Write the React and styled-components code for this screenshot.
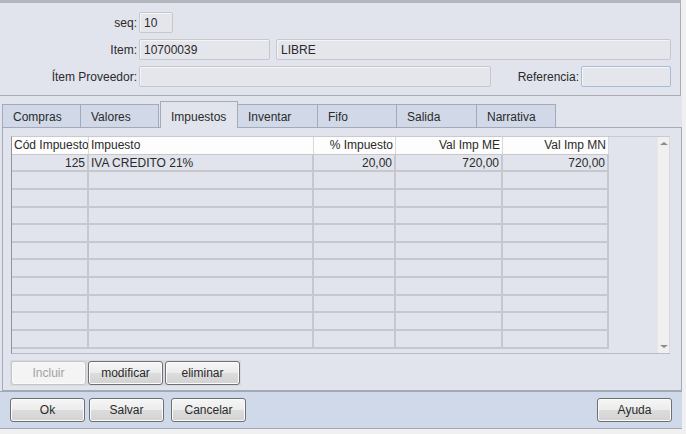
import React from 'react';
import styled, { createGlobalStyle } from 'styled-components';

const GlobalStyle = createGlobalStyle`
  body {
    margin: 0;
    background: #f0f0f0;
    font-family: 'Liberation Sans', Arial, sans-serif;
    font-size: 12px;
    color: #2a2a2a;
  }
`;

const Window = styled.div`
  width: 682px;
  height: 434px;
  display: flex;
  flex-direction: column;
  background: #f0f0f0;
`;

const TopPanel = styled.div`
  height: 96px;
  flex: none;
  border-top: 3px solid #b2b6bd;
  border-right: 1px solid #a9adb5;
  border-bottom: 1px solid #a9adb5;
  background: #e1e4ec;
  padding: 9px 9px 0 0;
  box-sizing: border-box;
  display: flex;
  flex-direction: column;
  gap: 6px;
  margin-right: 1px;
`;

const FieldRow = styled.div`
  display: flex;
  align-items: center;
  height: 21px;
`;

const Label = styled.span`
  width: ${p => p.width || 139}px;
  text-align: right;
  padding-right: 2px;
  flex-shrink: 0;
  white-space: nowrap;
  box-sizing: border-box;
`;

const Input = styled.div`
  width: ${p => (p.width ? `${p.width}px` : 'auto')};
  flex: ${p => (p.grow ? 1 : 'none')};
  height: 21px;
  box-sizing: border-box;
  border: 1px solid ${p => (p.focus ? '#a6bcd8' : '#c6c8cc')};
  border-radius: 2px;
  background: #e4e6ec;
  box-shadow: inset 1px 1px 0 #f4f5f8;
  padding: 3px 4px 0;
  margin-left: ${p => p.ml || 0}px;
  line-height: 14px;
`;

const TabArea = styled.div`
  flex: none;
  height: 295px;
  background: #e1e4ec;
  padding: 8px 0 0 2px;
  box-sizing: border-box;
  display: flex;
  flex-direction: column;
`;

const TabStrip = styled.div`
  display: flex;
  align-items: flex-end;
  height: 23px;
  position: relative;
  z-index: 1;
`;

const Tab = styled.div`
  width: ${p => p.w}px;
  flex: none;
  box-sizing: border-box;
  height: ${p => (p.active ? 27 : 23)}px;
  margin-bottom: ${p => (p.active ? -1 : 0)}px;
  padding: ${p => (p.active ? '8px' : '5px')} 0 0 10px;
  line-height: 14px;
  background: ${p => (p.active ? '#e1e4ec' : '#d1d9e8')};
  border: 1px solid #a4abb8;
  border-bottom: none;
  margin-left: ${p => (p.active ? 2 : 0)}px;
  margin-right: -1px;
  position: relative;
  z-index: ${p => (p.active ? 1 : 0)};
`;

const TabPanel = styled.div`
  width: 680px;
  height: 264px;
  box-sizing: border-box;
  border: 1px solid #a4abb8;
  padding: 8px 11px 0 8px;
  display: flex;
  flex-direction: column;
`;

const GridBox = styled.div`
  height: 216px;
  flex: none;
  display: flex;
  border-left: 1px solid #8f949c;
  border-top: 1px solid #c7cad0;
  border-bottom: 1px solid #b8bcc4;
`;

const Table = styled.div`
  width: 597px;
  display: grid;
  grid-template-columns: 77px 225px 82px 107px 106px;
  grid-auto-rows: 17.65px;
  align-content: start;
  overflow: hidden;
`;

const HeadCell = styled.div`
  background: #fdfdfd;
  border-right: 1px solid #d8d8d8;
  border-bottom: 1px solid #c8c8c8;
  padding: 0 2px;
  text-align: ${p => (p.right ? 'right' : 'left')};
  line-height: 16px;
  white-space: nowrap;
  overflow: hidden;
`;

const Cell = styled.div`
  border-right: 2px solid #c6c8cd;
  border-bottom: 2px solid #c6c8cd;
  box-sizing: border-box;
  padding: 0 2px;
  text-align: ${p => (p.right ? 'right' : 'left')};
  line-height: 16px;
  white-space: nowrap;
`;

const Filler = styled.div`
  flex: 1;
`;

const ScrollBar = styled.div`
  width: 13px;
  background: #f0f0f0;
  border-left: 1px solid #e6e6e6;
  border-right: 1px solid #dadada;
  display: flex;
  flex-direction: column;
  justify-content: space-between;
  align-items: center;
  padding: 5px 0;
  box-sizing: border-box;
`;

const Arrow = styled.div`
  width: 0;
  height: 0;
  border-left: 4px solid transparent;
  border-right: 4px solid transparent;
  ${p =>
    p.down
      ? 'border-top: 3px solid #8a8a8a;'
      : 'border-bottom: 3px solid #8a8a8a;'}
`;

const ButtonGroup = styled.div`
  margin-top: 6px;
  align-self: flex-start;
  display: flex;
  gap: 2px;
  padding: 1px;
  margin-left: -1px;
  background: #d6d9df;
`;

const Button = styled.button`
  width: 75px;
  height: 24px;
  font-family: 'Liberation Sans', Arial, sans-serif;
  font-size: 12px;
  color: ${p => (p.disabled ? '#a2a2a2' : '#2a2a2a')};
  border: 1px solid ${p => (p.disabled ? '#c4c4c4' : '#6f6f6f')};
  border-radius: 3px;
  background: ${p =>
    p.disabled
      ? '#f4f4f4'
      : 'linear-gradient(#f6f6f6 0%, #ececec 48%, #dcdcdc 52%, #d2d2d2 100%)'};
  box-shadow: inset 0 0 0 1px ${p => (p.disabled ? '#fafafa' : '#fbfbfb')};
  padding: 0;
  margin-left: ${p => p.ml || 0}px;
`;

const BottomBar = styled.div`
  height: 38px;
  flex: none;
  box-sizing: border-box;
  background: #d0d9ea;
  border-top: 1px solid #a0a8b6;
  border-bottom: 1px solid #a0a8b6;
  padding: 6px 10px 0 10px;
  display: flex;
  align-items: flex-start;
`;

const Spacer = styled.div`
  flex: 1;
`;

const tabs = [
  { t: 'Compras', w: 79 },
  { t: 'Valores', w: 79 },
  { t: 'Impuestos', w: 78, active: true },
  { t: 'Inventar', w: 81 },
  { t: 'Fifo', w: 80 },
  { t: 'Salida', w: 81 },
  { t: 'Narrativa', w: 80 },
];
const headers = [
  { t: 'Cód Impuesto' },
  { t: 'Impuesto' },
  { t: '% Impuesto', r: true },
  { t: 'Val Imp ME', r: true },
  { t: 'Val Imp MN', r: true },
];
const rows = [['125', 'IVA CREDITO 21%', '20,00', '720,00', '720,00']];
while (rows.length < 11) rows.push(['', '', '', '', '']);

export default function App() {
  return (
    <Window>
      <GlobalStyle />
      <TopPanel>
        <FieldRow>
          <Label>seq:</Label>
          <Input width={34}>10</Input>
        </FieldRow>
        <FieldRow>
          <Label>Item:</Label>
          <Input width={131}>10700039</Input>
          <Input grow ml={6}>LIBRE</Input>
        </FieldRow>
        <FieldRow>
          <Label>Ítem Proveedor:</Label>
          <Input width={352}></Input>
          <Label width={90}>Referencia:</Label>
          <Input width={90} focus></Input>
        </FieldRow>
      </TopPanel>
      <TabArea>
        <TabStrip>
          {tabs.map(t => (
            <Tab key={t.t} w={t.w} active={t.active}>{t.t}</Tab>
          ))}
        </TabStrip>
        <TabPanel>
          <GridBox>
            <Table>
              {headers.map(h => (
                <HeadCell key={h.t} right={h.r}>{h.t}</HeadCell>
              ))}
              {rows.map((r, i) =>
                r.map((v, j) => (
                  <Cell key={`${i}-${j}`} right={j !== 1}>{v}</Cell>
                ))
              )}
            </Table>
            <Filler />
            <ScrollBar>
              <Arrow />
              <Arrow down />
            </ScrollBar>
          </GridBox>
          <ButtonGroup>
            <Button disabled>Incluir</Button>
            <Button>modificar</Button>
            <Button>eliminar</Button>
          </ButtonGroup>
        </TabPanel>
      </TabArea>
      <BottomBar>
        <Button>Ok</Button>
        <Button ml={4}>Salvar</Button>
        <Button ml={7}>Cancelar</Button>
        <Spacer />
        <Button>Ayuda</Button>
      </BottomBar>
    </Window>
  );
}
